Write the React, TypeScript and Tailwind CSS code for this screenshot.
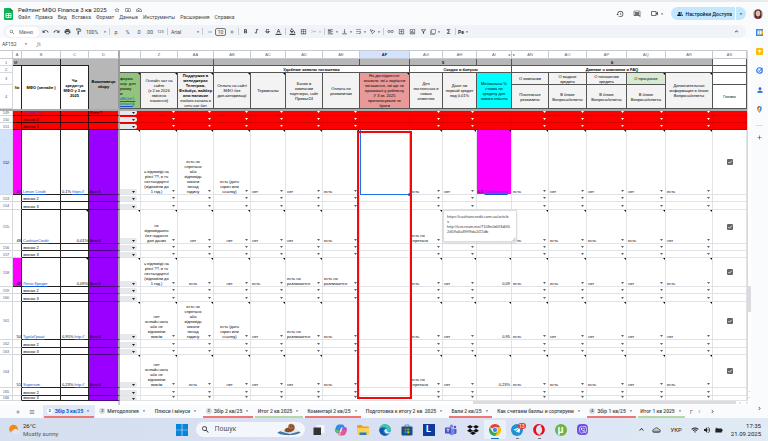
import { ReactNode } from "react";
import clsx from "clsx";
import {
  MdAdd,
  MdArrowDropDown,
  MdBorderAll,
  MdCallMerge,
  MdChevronLeft,
  MdChevronRight,
  MdFilterNone,
  MdFormatAlignLeft,
  MdFormatBold,
  MdFormatColorFill,
  MdFormatColorText,
  MdFormatItalic,
  MdFunctions,
  MdHistory,
  MdKeyboardArrowUp,
  MdLink,
  MdMenu,
  MdOutlineAddBox,
  MdOutlineCloudDone,
  MdOutlineDriveFileMove,
  MdOutlineFilterAlt,
  MdOutlineFormatPaint,
  MdOutlineInsertChart,
  MdOutlineInsertComment,
  MdOutlineVideocam,
  MdPeopleAlt,
  MdPerson,
  MdPrint,
  MdRedo,
  MdRemove,
  MdSearch,
  MdStarBorder,
  MdStrikethroughS,
  MdTextRotationAngleup,
  MdUndo,
  MdVerticalAlignBottom,
  MdVolumeUp,
  MdWifi,
  MdWrapText,
} from "react-icons/md";
import { FaDropbox, FaOpera, FaTelegramPlane, FaViber } from "react-icons/fa";

const menus = ["Файл", "Правка", "Вид", "Вставка", "Формат", "Данные", "Инструменты", "Расширения", "Справка"];

const columns = [
  { name: "A", width: "w-[9px]" },
  { name: "B", width: "w-[39px]" },
  { name: "C", width: "w-[28px]" },
  { name: "D", width: "w-[31px]" },
  { name: "", width: "w-[21px]" },
  { name: "Z", width: "w-[37px]" },
  { name: "AA", width: "w-[36px]" },
  { name: "AB", width: "w-[37px]" },
  { name: "AC", width: "w-[35px]" },
  { name: "AD", width: "w-[37px]" },
  { name: "AE", width: "w-[37px]" },
  { name: "AF", width: "w-[50px]" },
  { name: "AG", width: "w-[33px]" },
  { name: "AH", width: "w-[34px]" },
  { name: "AI", width: "w-[35px]" },
  { name: "AN", width: "w-[37px]" },
  { name: "AO", width: "w-[38px]" },
  { name: "AP", width: "w-[40px]" },
  { name: "AQ", width: "w-[39px]" },
  { name: "AR", width: "w-[47px]" },
  { name: "AS", width: "w-[34px]" },
];

const CHAT_ANY = "є відповіді на\nрізні ??, в тч\nнестандартні\n(відповіли до\n1 год.)";
const CHAT_NONE = "нет\nонлайн-чата\nабо не\nвідповіли\nзовсім";
const MESSENGER = "есть но\nспрятано\nабо\nвідповідь\nчекати\nпонад\nгодину";
const SCREEN = "есть (дать\nскрин или\nссылку)";
const DIFFERS = "есть но\nразличается";
const HIDDEN = "есть но\nспрятано";

interface Company {
  id: number;
  height: string;
  no: string;
  name: string;
  rate: string;
  url?: string;
  pink?: boolean;
  selected?: boolean;
  // Z, AA, AB, AC, AD, AE
  payments: string[];
  // AG, AH
  bonuses: string[];
  minRate: string;
  // AN, AO, AP, AQ, AR
  faq: string[];
  calls: { id: number; height: string }[];
}

const companies: Company[] = [
  {
    id: 152,
    height: "h-[65px]",
    no: "47",
    name: "Limon Credit",
    rate: "0,1%",
    url: "https://",
    pink: true,
    selected: true,
    payments: [CHAT_ANY, MESSENGER, SCREEN, "нет", "нет", "есть"],
    bonuses: ["есть", "нет"],
    minRate: "0,1",
    faq: ["есть", "нет", "нет", "нет", "есть"],
    calls: [
      { id: 153, height: "h-[7px]" },
      { id: 154, height: "h-[8px]" },
    ],
  },
  {
    id: 155,
    height: "h-[34px]",
    no: "48",
    name: "CashtanCredit",
    rate: "0,01%",
    payments: ["не\nвідповідають\nбез надання\nдоп даних", "нет", "нет", "нет", "нет", "есть"],
    bonuses: [HIDDEN, "есть"],
    minRate: "0,01%",
    faq: ["есть", "есть", "есть", "есть", "нет"],
    calls: [
      { id: 156, height: "h-[7px]" },
      { id: 157, height: "h-[7px]" },
    ],
  },
  {
    id: 158,
    height: "h-[29px]",
    no: "49",
    name: "Легко Кредит",
    rate: "0,09%",
    pink: true,
    payments: [CHAT_ANY, "есть", "нет", "есть", DIFFERS, DIFFERS],
    bonuses: ["есть", "нет"],
    minRate: "0,09",
    faq: ["есть", "есть", "нет", "нет", "есть"],
    calls: [
      { id: 159, height: "h-[7px]" },
      { id: 160, height: "h-[8px]" },
    ],
  },
  {
    id: 161,
    height: "h-[38px]",
    no: "50",
    name: "ТурбоГроші",
    rate: "0,95%",
    url: "http://",
    payments: [CHAT_NONE, MESSENGER, SCREEN, "нет", DIFFERS, "есть"],
    bonuses: ["есть", "нет"],
    minRate: "0,95",
    faq: ["есть", "нет", "нет", "нет", "нет"],
    calls: [
      { id: 162, height: "h-[8px]" },
      { id: 163, height: "h-[7px]" },
    ],
  },
  {
    id: 164,
    height: "h-[33px]",
    no: "51",
    name: "Superium",
    rate: "0,23%",
    url: "http://",
    payments: [CHAT_NONE, "есть", "нет", "нет", "нет", "есть"],
    bonuses: [HIDDEN, "нет"],
    minRate: "0,23%",
    faq: ["есть", "есть", "есть", "нет", "есть"],
    calls: [
      { id: 165, height: "h-[8px]" },
      { id: 166, height: "h-[5px]" },
    ],
  },
];

const tabs = [
  { label: "Збір 3 кв/25", badge: "2", width: "w-[52px]", mark: "bg-[#f07575]", active: true },
  { label: "Методология", badge: "2", width: "w-[56px]" },
  { label: "Плюси і мінуси", width: "w-[51px]" },
  { label: "Збір 2 кв/25", badge: "3", width: "w-[52px]", mark: "bg-[#f07575]" },
  { label: "Итог 2 кв 2025", width: "w-[50px]", mark: "bg-[#b6d7a8]" },
  { label: "Коментарі 2 кв/25", width: "w-[58px]", mark: "bg-[#f07575]" },
  { label: "Подготовка к итогу 2 кв  2025", width: "w-[86px]" },
  { label: "Бали 2 кв/25", width: "w-[45px]", mark: "bg-[#f07575]" },
  { label: "Как считаем баллы и сортируем", width: "w-[93px]" },
  { label: "Збір 1 кв/25", badge: "4", width: "w-[51px]", mark: "bg-[#f07575]" },
  { label: "Итог 1 кв 2025", width: "w-[49px]", mark: "bg-[#b6d7a8]" },
];

const Sep = () => <span className="mx-px h-[7px] w-px shrink-0 bg-[#c7cbd1]" />;

const Tool = ({ label, menu, faded, children }: { label: string; menu?: boolean; faded?: boolean; children: ReactNode }) => (
  <button
    aria-label={label}
    className={clsx(
      "flex h-[11px] shrink-0 items-center justify-center",
      menu ? "w-[14px]" : "w-[11px]",
      faded ? "text-[#a8abaf]" : "text-[#444746]"
    )}
  >
    {children}
    {menu && <MdArrowDropDown className="size-[6px]" />}
  </button>
);

const Header = () => (
  <header className="flex h-[25px] items-center border-t-2 border-[#e8eaed] bg-[#f9fbfd] pr-[5px] pl-1">
    <svg viewBox="0 0 18 24" className="h-3 w-[9px] shrink-0">
      <path d="M2 0h10l6 6v16a2 2 0 0 1-2 2H2a2 2 0 0 1-2-2V2a2 2 0 0 1 2-2z" fill="#0fb457" />
      <path d="M12 0l6 6h-6z" fill="#0b8043" />
      <path d="M4 11h10v8H4zM4 15h10M9 11v8" fill="none" stroke="#fff" strokeWidth="1.6" />
    </svg>
    <div className="ml-[5px] flex flex-col">
      <div className="flex items-center gap-[5px] text-[#444746]">
        <h1 className="mr-[2px] text-[6px] leading-[8px] text-[#1f1f1f]">Рейтинг МФО Finance 3 кв 2025</h1>
        <button aria-label="Добавить в избранное"><MdStarBorder className="size-[6px]" /></button>
        <button aria-label="Переместить"><MdOutlineDriveFileMove className="size-[6px]" /></button>
        <button aria-label="Статус документа"><MdOutlineCloudDone className="size-[6px]" /></button>
      </div>
      <nav className="flex gap-[5px]">
        {menus.map((m) => (
          <button key={m} className="text-[5px] leading-[7px] text-[#444746]">
            {m}
          </button>
        ))}
      </nav>
    </div>
    <div className="ml-auto flex items-center gap-[9px] text-[#444746]">
      <button aria-label="История изменений"><MdHistory className="size-2" /></button>
      <button aria-label="Комментарии"><MdOutlineInsertComment className="size-2" /></button>
      <button aria-label="Встреча" className="flex items-center">
        <MdOutlineVideocam className="size-[9px]" />
        <MdArrowDropDown className="size-[6px]" />
      </button>
    </div>
    <div className="ml-[6px] flex h-[13px] items-center rounded-full bg-[#c2e7ff] text-[#001d35]">
      <button className="flex h-full items-center gap-[3px] pr-[3px] pl-[6px] text-[5px] leading-[6px] font-medium whitespace-nowrap">
        <MdPeopleAlt className="size-[6px]" />
        Настройки Доступа
      </button>
      <button aria-label="Ещё варианты доступа" className="flex h-full w-[11px] items-center justify-center border-l border-white">
        <MdArrowDropDown className="size-[6px]" />
      </button>
    </div>
    <button aria-label="Аккаунт" className="ml-[7px] size-[10px] shrink-0 overflow-hidden rounded-full">
      <svg viewBox="0 0 20 20">
        <rect width="20" height="20" fill="#c9b6b8" />
        <path d="M3 20V8a7 7 0 0 1 14 0v12z" fill="#4b2c2c" />
        <ellipse cx="10" cy="9" rx="4.5" ry="6" fill="#e8b9a4" />
        <path d="M4 20c1-4 11-4 12 0z" fill="#a8324a" />
      </svg>
    </button>
  </header>
);

const Toolbar = () => (
  <div className="mr-[5px] ml-[3px] flex h-[13px] items-center rounded-full bg-[#f0f4f9] pr-[6px] pl-[3px] text-[5px] leading-[6px] text-[#444746]">
    <label className="mr-px flex h-[10px] w-[33px] shrink-0 items-center gap-1 rounded-full bg-white pl-[3px]">
      <MdSearch className="size-[6px] shrink-0" />
      <input aria-label="Меню" placeholder="Меню" className="w-5 min-w-0 outline-none placeholder:text-[#5f6368]" />
    </label>
    <Tool label="Отменить"><MdUndo className="size-[7px]" /></Tool>
    <Tool label="Повторить"><MdRedo className="size-[7px]" /></Tool>
    <Tool label="Печать"><MdPrint className="size-[7px]" /></Tool>
    <Tool label="Копировать форматирование"><MdOutlineFormatPaint className="size-[7px]" /></Tool>
    <label className="flex w-6 shrink-0 items-center pl-[2px]">
      <select aria-label="Масштаб" className="w-4 appearance-none outline-none">
        <option>100%</option>
      </select>
      <MdArrowDropDown className="size-[6px]" />
    </label>
    <Sep />
    <Tool label="Денежный формат">р.</Tool>
    <Tool label="Процентный формат">%</Tool>
    <Tool label="Меньше знаков">.0</Tool>
    <Tool label="Больше знаков">.00</Tool>
    <Tool label="Другие форматы"><span className="text-[4px]">123</span></Tool>
    <Sep />
    <label className="flex w-8 shrink-0 items-center justify-between pl-[2px]">
      <select aria-label="Шрифт" className="w-5 appearance-none outline-none">
        <option>Arial</option>
      </select>
      <MdArrowDropDown className="size-[6px]" />
    </label>
    <Sep />
    <Tool label="Уменьшить шрифт"><MdRemove className="size-[6px]" /></Tool>
    <input
      aria-label="Размер шрифта"
      defaultValue="10"
      className="h-2 w-[11px] shrink-0 rounded-[2px] border border-[#747775] text-center text-[5px] leading-[6px] outline-none"
    />
    <Tool label="Увеличить шрифт"><MdAdd className="size-[6px]" /></Tool>
    <Sep />
    <Tool label="Полужирный"><MdFormatBold className="size-[7px]" /></Tool>
    <Tool label="Курсив"><MdFormatItalic className="size-[7px]" /></Tool>
    <Tool label="Зачеркнутый"><MdStrikethroughS className="size-[7px]" /></Tool>
    <Tool label="Цвет текста"><MdFormatColorText className="size-[7px]" /></Tool>
    <Sep />
    <Tool label="Цвет заливки"><MdFormatColorFill className="size-[7px]" /></Tool>
    <Tool label="Границы"><MdBorderAll className="size-[7px]" /></Tool>
    <Tool label="Объединить ячейки" menu faded><MdCallMerge className="size-[7px] rotate-90" /></Tool>
    <Sep />
    <Tool label="Выравнивание" menu><MdFormatAlignLeft className="size-[7px]" /></Tool>
    <Tool label="Выравнивание по вертикали" menu><MdVerticalAlignBottom className="size-[7px]" /></Tool>
    <Tool label="Перенос текста" menu><MdWrapText className="size-[7px]" /></Tool>
    <Tool label="Поворот текста" menu><MdTextRotationAngleup className="size-[7px]" /></Tool>
    <Sep />
    <Tool label="Вставить ссылку"><MdLink className="size-[7px]" /></Tool>
    <Tool label="Вставить комментарий"><MdOutlineAddBox className="size-[7px]" /></Tool>
    <Tool label="Вставить диаграмму"><MdOutlineInsertChart className="size-[7px]" /></Tool>
    <Tool label="Фильтр"><MdOutlineFilterAlt className="size-[7px]" /></Tool>
    <Tool label="Режимы фильтрации" menu><MdFilterNone className="size-[6px]" /></Tool>
    <Tool label="Функции"><MdFunctions className="size-[7px]" /></Tool>
    <Sep />
    <Tool label="Способ ввода" menu><b className="text-[#1f1f1f]">Ре</b></Tool>
    <button aria-label="Скрыть меню" className="ml-auto"><MdKeyboardArrowUp className="size-[7px]" /></button>
  </div>
);

const FormulaBar = () => (
  <div className="flex h-3 items-center bg-white pl-[2px] text-[#444746]">
    <input aria-label="Поле имени" defaultValue="AF152" className="w-[21px] text-[5px] leading-[6px] outline-none" />
    <button aria-label="Диапазоны"><MdArrowDropDown className="size-[6px]" /></button>
    <i className="ml-2 font-serif text-[5px] leading-[6px] text-[#80868b]">fx</i>
    <input aria-label="Формула" className="ml-1 min-w-0 flex-1 text-[5px] leading-[6px] outline-none" />
  </div>
);

const Note = () => (
  <svg viewBox="0 0 4 4" className="absolute top-0 right-0 size-[2px]">
    <path d="M0 0h4v4z" fill="#000" />
  </svg>
);

const Pick = ({ light }: { light?: boolean }) => (
  <button aria-label="Выбрать значение" className="mr-[2px] mb-[2px] shrink-0">
    <svg viewBox="0 0 6 4" className="h-[2px] w-[3px]">
      <path d="M0 0h6L3 4z" fill={light ? "#fff" : "#5f6368"} />
    </svg>
  </button>
);

const Chip = () => (
  <button aria-label="Выбрать значение" className="flex h-[5px] w-[17px] items-center justify-end rounded-r-full bg-[#e6e8eb] pr-[2px]">
    <svg viewBox="0 0 6 4" className="h-[2px] w-[3px]">
      <path d="M0 0h6L3 4z" fill="#202124" />
    </svg>
  </button>
);

const grid = "relative border-r border-b border-[#e1e3e6] align-bottom";

// Empty or filled drop-down cell
const PickCell = ({ text, note, center }: { text?: string; note?: boolean; center?: boolean }) => (
  <td className={grid}>
    {note && <Note />}
    <div className="flex items-end">
      <span className={clsx("min-w-0 flex-1 whitespace-pre", center ? "text-center" : "pl-px")}>{text}</span>
      <Pick />
    </div>
  </td>
);

const RowNo = ({ id, selected }: { id: number; selected?: boolean }) => (
  <th
    scope="row"
    className={clsx(
      "border-r border-b border-[#d5d8dc] text-center align-middle font-normal",
      selected ? "bg-[#d3e3fd] text-[#041e49]" : "bg-white text-[#5f6368]"
    )}
  >
    {id}
  </th>
);

const CallRow = ({ id, height, label }: { id: number; height: string; label: string }) => {
  const cut = height === "h-[5px]";
  return (
    <tr className={clsx(height, cut && "leading-[4px]")}>
      <RowNo id={id} />
      <td className="border-r border-b border-r-[#222] border-b-[#d5d8dc]" />
      <td className="border-r border-b border-[#222] pl-px align-bottom">{label}</td>
      <td className="border-r border-b border-[#222]" />
      <td className="border-r-2 border-b border-r-[#aaa] border-b-[#4a0080] bg-[#9900ff]" />
      <td className="border-r border-b border-[#e1e3e6] align-bottom">
        <div className={clsx(cut && "h-1 overflow-hidden")}><Chip /></div>
      </td>
      {Array.from({ length: 6 }, (_, i) => <PickCell key={i} />)}
      <td className={grid} />
      <PickCell />
      <PickCell />
      <td className={grid} />
      {Array.from({ length: 5 }, (_, i) => <PickCell key={i} />)}
      <td className={grid} />
    </tr>
  );
};

const RedRow = ({ id, height, label, who }: { id: number; height: string; label: ReactNode; who?: string }) => {
  const cut = height === "h-[5px]";
  const cell = "border-r border-b border-r-[#f00000] border-b-[#d80000] align-bottom";
  const clip = clsx(cut && "flex h-1 items-end overflow-hidden");
  return (
    <tr className={clsx(height, "bg-[#ff0000]", cut && "leading-[4px]")}>
      <RowNo id={id} />
      <td className="border-r border-b border-[#400]" />
      <td className="border-r border-b border-[#400] pl-px align-bottom"><div className={clip}>{label}</div></td>
      <td className="border-r border-b border-[#400]" />
      <td className="border-r-2 border-b border-r-[#aaa] border-b-[#400] pl-px align-bottom"><div className={clip}>{who}</div></td>
      <td className={cell}><div className={clip}><Chip /></div></td>
      {columns.slice(5).map((c) => (
        <td key={c.name} className={cell}>
          {!["AF", "AI", "AS"].includes(c.name) && (
            <div className="flex justify-end"><Pick light /></div>
          )}
        </td>
      ))}
    </tr>
  );
};

const Tooltip = () => (
  <div className="absolute top-0 left-0 z-20 h-8 w-[74px] border border-[#dadce0] bg-white pt-[3px] pl-[3px] text-left leading-[5px] whitespace-pre text-[#3c4043] shadow-sm">
    {"https://cashtancredit.com.ua/article\ns\nhttp://icecream.me/7108e0d0f3d0f0\n2d59a6a89f9fda1f21db"}
    <svg viewBox="0 0 8 8" className="absolute right-0 bottom-0 size-1">
      <path d="M1 8L8 1M5 8l3-3" stroke="#5f6368" fill="none" />
    </svg>
  </div>
);

const CompanyRow = ({ row }: { row: Company }) => (
  <tr className={row.height}>
    <RowNo id={row.id} selected={row.selected} />
    <td
      className={clsx(
        "border-r border-b border-r-[#222] text-right align-bottom",
        row.pink ? "border-b-[#222] bg-[#ff00ff]" : "border-b-[#d5d8dc]"
      )}
    >
      {row.no}
    </td>
    <td className="border-r border-b border-[#222] pl-px align-bottom">
      <a href="#" className="text-[#1155cc] underline">{row.name}</a>
    </td>
    <td className="relative border-r border-b border-[#222] align-bottom">
      {!row.url && <Note />}
      <div className={clsx("flex gap-px whitespace-nowrap", row.url ? "pl-px" : "justify-end")}>
        {row.rate}
        {row.url && <a href="#" className="text-[#1155cc] underline">{row.url}</a>}
      </div>
    </td>
    <td className="border-r-2 border-b border-r-[#aaa] border-b-[#4a0080] bg-[#9900ff] pl-px align-bottom">Аня К</td>
    <td className={grid}>
      <Note />
      <Chip />
    </td>
    {row.payments.map((p, i) => <PickCell key={i} text={p} note center={i < 3} />)}
    <td className={clsx("relative border-r border-b", row.selected ? "border-b-[#1a73e8] border-r-[#a8c7fa]" : "border-[#e1e3e6]")}>
      {row.selected && (
        <>
          <span className="absolute inset-0 border-l border-[#1a73e8]" />
          <span className="absolute -right-[2px] -bottom-[2px] z-10 size-[3px] rounded-full bg-[#1a56db]" />
          <span className="absolute top-px -right-[3px] -left-[3px] z-10 h-[268px] border-2 border-[#f00a0a]" />
        </>
      )}
    </td>
    <PickCell text={row.bonuses[0]} note />
    <td className={grid}>
      <Note />
      <div className="flex items-end">
        <span className="flex-1 pl-px">{row.bonuses[1]}</span>
        <Pick />
      </div>
      {row.id === 155 && <Tooltip />}
    </td>
    <td className={clsx(grid, row.selected && "bg-[#ff00ff]")}>
      <Note />
      {row.selected ? (
        <div className="pl-px whitespace-nowrap">
          {row.minRate} <a href="#" className="text-[#1155cc] underline">http://icecrea</a>
        </div>
      ) : (
        <div className="pr-px text-right">{row.minRate}</div>
      )}
    </td>
    {row.faq.map((f, i) => <PickCell key={i} text={f} note />)}
    <td className="border-r border-b border-[#e1e3e6] text-center align-middle">
      <label className="relative inline-block size-[6px] align-middle">
        <input
          type="checkbox"
          defaultChecked
          aria-label={`Готово: ${row.name}`}
          className="block size-[6px] appearance-none rounded-[1px] bg-[#666]"
        />
        <svg viewBox="0 0 12 12" className="pointer-events-none absolute inset-0 size-[6px]">
          <path d="M2.5 6l2.5 2.5 4.5-5" fill="none" stroke="#fff" strokeWidth="1.6" />
        </svg>
      </label>
    </td>
  </tr>
);

const head = "relative border-r border-b border-[#555] text-center align-middle whitespace-pre";

const HeadCell = ({ text, tone = "bg-[#f3f3f3]", tall, note }: { text: string; tone?: string; tall?: boolean; note?: boolean }) => (
  <th rowSpan={tall ? 2 : 1} className={clsx(head, "font-normal", tone)}>
    {note && <Note />}
    {text}
  </th>
);

const Sheet = () => (
  <table className="w-full table-fixed border-separate border-spacing-0 bg-white text-[4px] leading-[5px] text-black">
    <colgroup>
      <col className="w-[13px]" />
      {columns.map((c) => <col key={c.width + c.name} className={c.width} />)}
    </colgroup>
    <thead>
      <tr className="h-[9px]">
        <td className="border-t border-r border-b border-[#c7cbd1]" />
        {columns.map((c) => (
          <th
            key={c.name}
            scope="col"
            className={clsx(
              "relative border-t border-b border-[#c7cbd1] text-center align-middle",
              c.name === "D" ? "border-r-2 border-r-[#aaa]" : "border-r",
              c.name === "AF" ? "bg-[#d3e3fd] font-bold text-[#041e49]" : "font-normal text-[#5f6368]"
            )}
          >
            {c.name}
            {c.name === "AI" && <span className="absolute top-[1px] right-px">◂</span>}
            {c.name === "AN" && <span className="absolute top-[1px] left-px">▸</span>}
          </th>
        ))}
      </tr>
      <tr className="h-[7px]">
        <RowNo id={1} />
        <td className="border-b border-[#222] bg-[#b7b7b7] pl-px align-middle">М</td>
        <td className="border-r border-b border-[#222] bg-[#b7b7b7]" />
        <td className="border-b border-[#222] bg-[#b7b7b7]" />
        <th rowSpan={4} className="border-r-2 border-[#999] bg-[#b7b7b7] text-center align-middle font-bold whitespace-pre">
          {"Виконавець\nзбору"}
        </th>
        <td colSpan={3} className="border-r border-b border-[#555] bg-[#b7b7b7]" />
        <td colSpan={4} className="border-r border-b border-[#555] bg-[#b7b7b7]" />
        <td className="border-r border-b border-[#555] bg-[#b7b7b7]" />
        <th colSpan={2} className={clsx(head, "bg-[#b7b7b7] font-bold")}>5</th>
        <td className="border-r border-b border-[#555] bg-[#b7b7b7]" />
        <th colSpan={5} className={clsx(head, "bg-[#b7b7b7] font-bold")}>6</th>
        <td className="border-r border-b border-[#555]" />
      </tr>
      <tr className="h-[7px]">
        <RowNo id={2} />
        <th rowSpan={3} className="border-r border-[#222] text-center align-middle font-bold">№</th>
        <th rowSpan={3} className="border-r border-[#222] text-center align-middle font-bold whitespace-nowrap">МФО (онлайн )</th>
        <th rowSpan={3} className="border-r border-[#222] text-center align-middle font-bold whitespace-pre">
          {"Чи\nкредитує\nМФО у 3 кв\n2025"}
        </th>
        <td colSpan={3} className="border-r border-b border-[#555]" />
        <th colSpan={5} className={clsx(head, "font-bold")}>Удобные каналы погашения</th>
        <th colSpan={3} className={clsx(head, "font-bold")}>Скидки и бонусы</th>
        <th colSpan={5} className={clsx(head, "font-bold")}>Данные о компании и FAQ</th>
        <td className="border-r border-b border-[#555]" />
      </tr>
      <tr className="h-3">
        <RowNo id={3} />
        <th rowSpan={2} className="relative border-r border-b border-[#555] bg-[#93c47d] text-left align-middle font-normal whitespace-pre">
          <Note />
          <div>{"форма\nапр. для\nрвому\nи:"}</div>
          <a href="#" className="block text-[#1155cc] underline">dBiQeO,</a>
          <a href="#" className="text-[#1155cc] underline">ontacts</a>)
        </th>
        <HeadCell tall note text={"Онлайн чат на\nсайте\n(з 2 кв 2024\nзмінено\nзначення)"} />
        <th rowSpan={2} className={clsx(head, "bg-[#f3f3f3] font-bold")}>
          <Note />
          <span className="block">{"Поддержка в\nменеджерах\nТелеграм,\nФейсбук, вайбер\nили наличие"}</span>
          <span className="block font-normal">{"любого канала в\nсеть чат бот"}</span>
        </th>
        <HeadCell tall note text={"Оплата на сайті\nМФО без\nдоп.авторизації"} />
        <HeadCell tall note text="Терминалы" />
        <HeadCell tall text={"Банки и\nкомпании\nпартнеры, сайт\nПриват24"} />
        <HeadCell tall text={"Оплата по\nреквизитам"} />
        <HeadCell
          tall
          note
          tone="bg-[#ea9999]"
          text={"На дослідження:\nвказати, які є варіанти\nпогашення, які ще не\nвраховані у рейтингу\nУ 3 кв. 2025\nпроголосували не\nбрати"}
        />
        <HeadCell tall text={"Для\nпостоянных и\nновых\nклиентов"} />
        <HeadCell tall text={"Дают ли\nпервый кредит\nпод 0,01%"} />
        <HeadCell tall tone="bg-[#00ffff]" text={"Мінімальна %\nставка по\nкредиту для\nнового клієнта"} />
        <HeadCell text="О компании" />
        <HeadCell text={"О выдаче\nкредита"} />
        <HeadCell text={"О погашении\nкредита"} />
        <HeadCell note tone="bg-[#d9ead3]" text="О просрочке" />
        <HeadCell tall note text={"Дополнительная\nинформация в блоке\nВопросы/ответы"} />
        <td className="border-r border-b border-[#555]" />
      </tr>
      <tr className="h-6">
        <RowNo id={4} />
        <HeadCell text={"Платежные\nреквизиты"} />
        <HeadCell text={"В блоке\nВопросы/ответы"} />
        <HeadCell text={"В блоке\nВопросы/ответы"} />
        <HeadCell text={"В блоке\nВопросы/ответы"} />
        <HeadCell tone="bg-white" text="Готово" />
      </tr>
      <tr className="h-[2px] leading-[0px]">
        <td colSpan={22} className="bg-[#aaa]" />
      </tr>
    </thead>
    <tbody>
      <RedRow
        id={149}
        height="h-[5px]"
        label={<a href="#" className="text-[#5b2ca0] underline">CreditPlus</a>}
        who="Катя Т"
      />
      <RedRow id={150} height="h-[7px]" label="звонок 2" />
      <RedRow id={151} height="h-[7px]" label="звонок 3" />
      {companies.map((row) => [
        <CompanyRow key={row.id} row={row} />,
        ...row.calls.map((c, i) => (
          <CallRow key={c.id} id={c.id} height={c.height} label={i === 0 ? "звонок 2" : "звонок 3"} />
        )),
      ])}
    </tbody>
  </table>
);

const SheetTabs = () => (
  <div className="flex h-[13px] items-center overflow-hidden bg-[#f9fbfd] text-[5px] leading-[6px] text-[#444746]">
    <button aria-label="Добавить лист" className="ml-[15px]"><MdAdd className="size-[6px]" /></button>
    <button aria-label="Все листы" className="mr-2 ml-2"><MdMenu className="size-[6px]" /></button>
    {tabs.map((t) => (
      <button
        key={t.label}
        className={clsx(
          "flex h-full shrink-0 flex-col px-px",
          t.width,
          t.active ? "bg-[#e1e9f7] font-bold text-[#0b57d0]" : "font-medium"
        )}
      >
        <span className="flex w-full flex-1 items-center justify-center gap-[2px] whitespace-pre">
          {t.badge && (
            <span className={clsx("size-[6px] rounded-full text-center text-[4px]", t.active ? "bg-white" : "bg-[#d3dbe5]")}>
              {t.badge}
            </span>
          )}
          {t.label}
          <MdArrowDropDown className="size-[6px]" />
        </span>
        <span className={clsx("h-[2px] w-full shrink-0", t.mark)} />
      </button>
    ))}
    <span className="ml-1">Г</span>
    <button aria-label="Назад" className="ml-[3px] text-[#a8abaf]"><MdChevronLeft className="size-[7px]" /></button>
    <button aria-label="Вперёд" className="ml-[6px]"><MdChevronRight className="size-[7px]" /></button>
  </div>
);

const SidePanel = () => (
  <aside className="flex w-[17px] shrink-0 flex-col items-center gap-3 bg-[#f9fbfd] pt-1 text-[#444746]">
    <button aria-label="Календарь">
      <svg viewBox="0 0 14 14" className="size-[7px]">
        <path d="M0 0h14v14H0z" fill="#4285f4" />
        <path d="M11 3h3v8h-3z" fill="#fbbc04" />
        <path d="M3 11h8v3H3z" fill="#34a853" />
        <path d="M11 11h3l-3 3z" fill="#ea4335" />
        <path d="M3 3h8v8H3z" fill="#fff" />
        <path d="M5 5h3l-1 2 1 2H5" stroke="#4285f4" fill="none" />
      </svg>
    </button>
    <button aria-label="Keep">
      <svg viewBox="0 0 14 14" className="size-[7px]">
        <rect width="14" height="14" rx="2" fill="#fbbc04" />
        <circle cx="7" cy="6" r="2.6" fill="#fff" />
        <path d="M5.8 9.5h2.4V11H5.8z" fill="#fff" />
      </svg>
    </button>
    <button aria-label="Задачи">
      <svg viewBox="0 0 14 14" className="size-[7px]">
        <circle cx="7" cy="7" r="5.5" fill="none" stroke="#2a78f0" strokeWidth="2.4" />
        <path d="M4.5 7l2 2L12.5 2.5" fill="none" stroke="#1a57c4" strokeWidth="2" />
      </svg>
    </button>
    <button aria-label="Контакты"><MdPerson className="size-2 text-[#1a67e0]" /></button>
    <button aria-label="Карты">
      <svg viewBox="0 0 14 14" className="size-[7px]">
        <path d="M7 14C5 10 2.5 8.5 2.5 4.8A4.5 4.5 0 0 1 7 0z" fill="#34a853" />
        <path d="M7 14c2-4 4.5-5.5 4.5-9.2A4.5 4.5 0 0 0 7 0z" fill="#4285f4" />
        <path d="M3 3a4.5 4.5 0 0 1 4-3l1 3-3 3z" fill="#ea4335" />
        <path d="M3 7l5-3v5l-2 3z" fill="#fbbc04" />
        <circle cx="7" cy="4.7" r="1.6" fill="#fff" />
      </svg>
    </button>
    <div className="flex flex-col items-center gap-2">
      <span className="h-px w-[7px] bg-[#dadce0]" />
      <button aria-label="Дополнения"><MdAdd className="size-[7px]" /></button>
    </div>
    <button aria-label="Скрыть панель" className="mt-auto mb-[6px]"><MdChevronRight className="size-[7px]" /></button>
  </aside>
);

const TaskApp = ({ label, active, children }: { label: string; active?: boolean; children: ReactNode }) => (
  <button
    aria-label={label}
    className={clsx("relative flex h-[19px] w-[22px] shrink-0 items-center justify-center", active && "rounded-[2px] bg-[#eaf1fa]")}
  >
    {children}
    {active && <span className="absolute bottom-0 left-[7px] h-px w-2 rounded-full bg-[#0a6cc4]" />}
  </button>
);

const Taskbar = () => (
  <footer className="flex h-[23px] items-center bg-linear-to-r from-[#d5dfef] via-[#d9e0f3] to-[#e0ebf5] pr-[7px] pl-2 text-[6px] leading-[8px] text-[#222]">
    <button className="flex flex-1 items-center gap-1 text-left">
      <svg viewBox="0 0 24 24" className="size-[11px]">
        <circle cx="12" cy="11" r="9.5" fill="#f08a1c" />
        <path d="M11 22a4 4 0 0 1 0-8 5 5 0 0 1 9-1 4.5 4.5 0 0 1 0 9z" fill="#dbe6f6" />
      </svg>
      <span>
        26°C
        <br />
        <span className="text-[#555]">Mostly sunny</span>
      </span>
    </button>
    <div className="flex shrink-0 items-center">
      <button aria-label="Пуск" className="mr-2">
        <svg viewBox="0 0 24 24" className="size-3">
          <path d="M0 0h11.3v11.3H0zM12.7 0H24v11.3H12.7zM0 12.7h11.3V24H0zM12.7 12.7H24V24H12.7z" fill="#0a84d8" />
        </svg>
      </button>
      <label className="mr-[3px] flex h-[15px] w-[109px] items-center gap-[5px] rounded-full bg-[#f3f7fc] pr-1 pl-[5px]">
        <MdSearch className="size-[9px] shrink-0" />
        <input aria-label="Пошук" placeholder="Пошук" className="min-w-0 flex-1 text-[7px] leading-[9px] outline-none placeholder:text-[#555]" />
        <svg viewBox="0 0 48 26" className="h-[13px] w-6 shrink-0">
          <path d="M1 19c8-6 38-7 46 0-5 6-39 8-46 0z" fill="#3f78a8" />
          <path d="M7 17l9-6h22l6 6-18 5z" fill="#dfe9f0" />
          <path d="M15 16c1-6 5-7 9-7l8-6c5 2 4 9 1 12-4 4-14 5-18 1z" fill="#8a4f26" />
          <circle cx="28" cy="7" r="5.5" fill="#a9683a" />
          <circle cx="27" cy="6" r="1" fill="#1b1b1b" />
          <circle cx="31" cy="6" r="1" fill="#1b1b1b" />
        </svg>
      </label>
      <TaskApp label="Представление задач">
        <svg viewBox="0 0 24 24" className="size-3">
          <path d="M7 2h16v16H7z" fill="#f5f5f5" />
          <path d="M1 7h15v15H1z" fill="#333" />
        </svg>
      </TaskApp>
      <TaskApp label="Copilot">
        <svg viewBox="0 0 24 24" className="size-3">
          <path d="M8 1h7c3 0 3 5 5 6H12L8 18H5C0 18-1 12 2 6c1-3 3-5 6-5z" fill="#2a8be8" />
          <path d="M2 12h6l-1 6c-4 0-6-2-5-6z" fill="#62c462" />
          <path d="M16 23H9c-3 0-3-5-5-6h8l4-11h3c5 0 6 6 3 12-1 3-3 5-6 5z" fill="#e2579b" />
          <path d="M16 6h3c4 0 5 3 4 7l-9-1z" fill="#a35be0" />
          <path d="M6 18h6l-2 5c-3 0-3-3-4-5z" fill="#f6b63c" />
        </svg>
      </TaskApp>
      <TaskApp label="Проводник">
        <svg viewBox="0 0 24 24" className="size-3">
          <path d="M0 4a2 2 0 0 1 2-2h7l3 3h10a2 2 0 0 1 2 2v4H0z" fill="#e9a520" />
          <path d="M0 8h24v12a2 2 0 0 1-2 2H2a2 2 0 0 1-2-2z" fill="#fcd053" />
          <path d="M5 22v-5h14v5z" fill="#1d7fd0" />
        </svg>
      </TaskApp>
      <TaskApp label="Edge">
        <svg viewBox="0 0 24 24" className="size-3">
          <circle cx="12" cy="12" r="11.5" fill="#1473c8" />
          <path d="M.5 11C1 4 6 .5 12 .5S24 5 23.5 10c0 4-4 6-7 5-2-1-1-2-1-4 0-3-3-5-7-5S2 8 .5 11z" fill="#3fc8a8" />
          <path d="M9 11c-3 5 1 11 8 11-9 4-17-3-16-10 1-5 8-5 8-1z" fill="#1257a5" />
          <path d="M23 15c-3 6-11 5-12 0-1-3 1-5 3-5 3 0 0 4 3 5 2 1 4 1 6 0z" fill="#e5f2fb" />
        </svg>
      </TaskApp>
      <TaskApp label="Microsoft Store">
        <svg viewBox="0 0 24 24" className="size-3">
          <path d="M8 6V2h8v4" fill="none" stroke="#3fa0d8" strokeWidth="2" />
          <rect x="1" y="5" width="22" height="18" rx="2" fill="#17507f" />
          <path d="M7 9h4v4H7z" fill="#f25022" />
          <path d="M12.5 9h4v4h-4z" fill="#7fba00" />
          <path d="M7 14.5h4v4H7z" fill="#00a4ef" />
          <path d="M12.5 14.5h4v4h-4z" fill="#ffb900" />
        </svg>
      </TaskApp>
      <TaskApp label="Словарь">
        <span className="flex size-3 items-center justify-center bg-[#0f3c9c] text-[9px] leading-none font-bold text-white">L</span>
      </TaskApp>
      <TaskApp label="Teams">
        <svg viewBox="0 0 24 24" className="size-3">
          <circle cx="20" cy="6" r="2.5" fill="#5059c9" />
          <path d="M15 10h8v7c0 3-4 4-6 2z" fill="#5059c9" />
          <circle cx="13" cy="4.5" r="3.5" fill="#7b83eb" />
          <path d="M8 9h11v8c0 7-11 7-11 0z" fill="#7b83eb" />
          <rect x="0" y="7" width="12" height="12" rx="1" fill="#4b53bc" />
          <path d="M3 10.5h6M6 10.5V16" stroke="#fff" strokeWidth="1.6" />
        </svg>
      </TaskApp>
      <TaskApp label="Dropbox"><FaDropbox className="size-3 text-[#111]" /></TaskApp>
      <TaskApp label="Chrome" active>
        <svg viewBox="0 0 24 24" className="size-3">
          <path d="M12 12L1.6 6A12 12 0 0 1 22.4 6z" fill="#ea4335" />
          <path d="M12 12V6h10.4A12 12 0 0 1 12 24z" fill="#fbbc04" />
          <path d="M12 12l5 3-5 9A12 12 0 0 1 1.6 6l5 9z" fill="#34a853" />
          <circle cx="12" cy="12" r="5.5" fill="#fff" />
          <circle cx="12" cy="12" r="4.3" fill="#4285f4" />
        </svg>
      </TaskApp>
      <TaskApp label="Telegram">
        <span className="flex size-3 items-center justify-center rounded-full bg-[#1c93d6]">
          <FaTelegramPlane className="size-2 text-white" />
        </span>
        <span className="absolute top-[3px] right-[2px] rounded-full bg-[#e03c3c] px-px text-[5px] leading-[6px] text-white">13</span>
        <span className="absolute bottom-0 left-[10px] h-px w-[3px] bg-[#777]" />
      </TaskApp>
      <TaskApp label="Opera">
        <FaOpera className="size-3 text-[#e3101f]" />
        <span className="absolute bottom-0 left-[10px] h-px w-[3px] bg-[#777]" />
      </TaskApp>
      <TaskApp label="uTorrent">
        <span className="flex size-3 items-center justify-center rounded-full bg-[#6bb445] text-[10px] leading-none font-bold text-white">µ</span>
      </TaskApp>
      <TaskApp label="Viber">
        <span className="flex size-[11px] items-center justify-center rounded-[4px] bg-[#6f52e8]">
          <FaViber className="size-2 text-white" />
        </span>
      </TaskApp>
    </div>
    <div className="flex flex-1 items-center justify-end gap-[6px]">
      <button aria-label="Скрытые значки"><MdKeyboardArrowUp className="size-[9px]" /></button>
      <button aria-label="OneDrive">
        <svg viewBox="0 0 20 14" className="h-[6px] w-[9px]">
          <path d="M5 13a4 4 0 0 1 0-8 5.5 5.5 0 0 1 10 0 4 4 0 0 1 0 8z" fill="#ccc" stroke="#333" strokeWidth="1.6" />
          <path d="M2 10h16" stroke="#333" strokeWidth="1.6" />
        </svg>
      </button>
      <button className="mx-[3px]">УКР</button>
      <button aria-label="Сеть и звук" className="flex items-center gap-1">
        <MdWifi className="size-2" />
        <MdVolumeUp className="size-2" />
        <svg viewBox="0 0 20 14" className="h-[6px] w-2">
          <path d="M1 3h16v3h2v4h-2v3H1z" fill="#222" />
          <path d="M4 0l4 5-5 3z" fill="#222" />
        </svg>
      </button>
      <button className="ml-[2px] text-right">
        17:35
        <br />
        21.09.2025
      </button>
    </div>
  </footer>
);

export default function App() {
  return (
    <div className="flex flex-col overflow-hidden bg-white font-['Roboto','Liberation_Sans',sans-serif]">
      <Header />
      <div className="flex">
        <main className="flex min-w-0 flex-1 flex-col bg-[#f9fbfd]">
          <Toolbar />
          <FormulaBar />
          <div className="flex bg-white">
            <div className="min-w-0 flex-1 font-['Liberation_Sans',sans-serif]">
              <Sheet />
            </div>
            <div className="flex w-1 shrink-0 flex-col border-l border-[#d5d8dc]">
              <div className="flex-3" />
              <div className="h-[26px] bg-[#dadce0]" />
              <div className="flex-1" />
              <MdKeyboardArrowUp className="size-[3px] text-[#80868b]" />
              <MdKeyboardArrowUp className="mt-[3px] mb-[2px] size-[3px] rotate-180 text-[#80868b]" />
            </div>
          </div>
          <div className="flex h-1 bg-white">
            <div className="w-[120px] border-r-2 border-[#c7cbd1]" />
            <div className="flex-1" />
            <div className="h-[3px] w-[263px] bg-[#dadce0]" />
            <div className="flex w-[15px] justify-evenly text-[#80868b]">
              <MdChevronLeft className="size-1" />
              <MdChevronRight className="size-1" />
            </div>
          </div>
          <SheetTabs />
        </main>
        <SidePanel />
      </div>
      <Taskbar />
    </div>
  );
}
